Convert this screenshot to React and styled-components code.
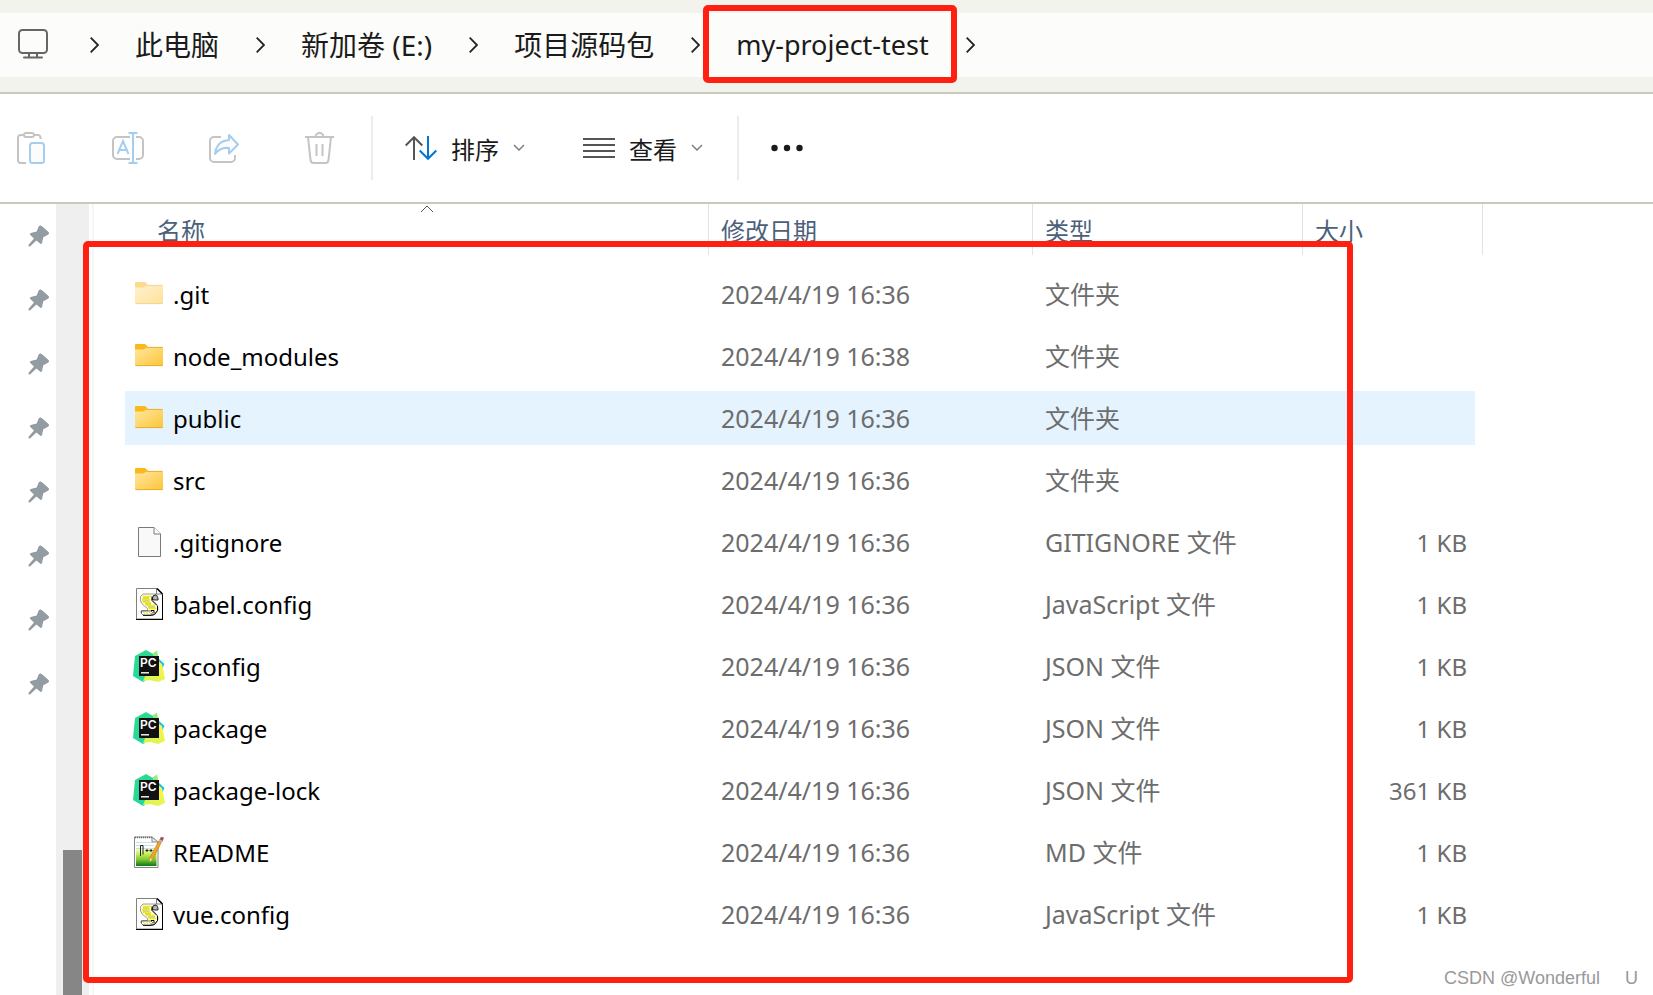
import styled, { createGlobalStyle } from "styled-components";

const crumbs = [
  { text: "此电脑" },
  { text: "新加卷 (E:)" },
  { text: "项目源码包" },
  { text: "my-project-test", marked: true },
];

const files = [
  { name: ".git", icon: "hiddenFolder", date: "2024/4/19 16:36", type: "文件夹" },
  { name: "node_modules", icon: "folder", date: "2024/4/19 16:38", type: "文件夹" },
  { name: "public", icon: "folder", date: "2024/4/19 16:36", type: "文件夹", selected: true },
  { name: "src", icon: "folder", date: "2024/4/19 16:36", type: "文件夹" },
  { name: ".gitignore", icon: "blank", date: "2024/4/19 16:36", type: "GITIGNORE 文件", size: "1 KB" },
  { name: "babel.config", icon: "script", date: "2024/4/19 16:36", type: "JavaScript 文件", size: "1 KB" },
  { name: "jsconfig", icon: "pycharm", date: "2024/4/19 16:36", type: "JSON 文件", size: "1 KB" },
  { name: "package", icon: "pycharm", date: "2024/4/19 16:36", type: "JSON 文件", size: "1 KB" },
  { name: "package-lock", icon: "pycharm", date: "2024/4/19 16:36", type: "JSON 文件", size: "361 KB" },
  { name: "README", icon: "notepad", date: "2024/4/19 16:36", type: "MD 文件", size: "1 KB" },
  { name: "vue.config", icon: "script", date: "2024/4/19 16:36", type: "JavaScript 文件", size: "1 KB" },
];

const pins = [1, 2, 3, 4, 5, 6, 7, 8];

const Folder = ({ faded }) => (
  <svg width="32" height="32" viewBox="0 0 32 32" opacity={faded ? 0.5 : 1}>
    <defs>
      <linearGradient id="folderFill" x1="0" y1="0" x2="1" y2="1">
        <stop offset="0" stopColor="#ffe6a0" />
        <stop offset="1" stopColor="#fdc63a" />
      </linearGradient>
    </defs>
    <path d="M2 5a1 1 0 0 1 1-1h8.500a2 2 0 0 1 1.500.700L15 7v4H2z" fill="#fbb81a" />
    <path d="M2 9.500h8.500L14 7h15a1 1 0 0 1 1 1v17a1 1 0 0 1-1 1H3a1 1 0 0 1-1-1z" fill="url(#folderFill)" />
    <path d="M13.500 7.400H29.500M2.500 25.600h27" stroke="#e5a91f" strokeWidth="0.9" />
  </svg>
);

const BlankFile = () => (
  <svg width="32" height="32" viewBox="0 0 32 32">
    <path d="M5.500 1.500H21l6.500 6.500v22.500h-22z" fill="#f9f9f9" stroke="#7b7b7b" />
    <path d="M21 1.500V8h6.500" fill="#fff" stroke="#7b7b7b" />
  </svg>
);

const ScriptFile = () => (
  <svg width="32" height="32" viewBox="0 0 32 32">
    <path d="M3.500 .5H24L29.500 6v25h-26z" fill="#fff" stroke="#808080" />
    <path d="M3 31.500h27M29.500 6v26" stroke="#000" />
    <path d="M23.500 0v6H30" fill="#fff" stroke="#808080" />
    <path d="M24 .5L29.500 6" stroke="#000" strokeWidth="1.500" />
    <path
      d="M10 6h13l-3 2.500-1 3 5.500 6 .5 4-3 5H10l-2-1.500v-2L9 22.500h5.500v-2l-5-4L7.500 13V8.500z"
      fill="#fffde0"
      stroke="#858585"
      strokeWidth="0.800"
    />
    <path
      d="M9.500 8.500h8.500M9 11.500h8M10 14.500h8M13 17.500h9M15.500 20.500h8"
      stroke="#f4ee00"
      strokeWidth="1.400"
    />
    <path d="M10 10h6M9.500 13h7M12 16h6M15 19h7" stroke="#9a9a10" strokeWidth="0.700" />
    <path d="M19 11.500l1.500-4 3-.5 1.500 3v2h-3z" fill="#b5b5b5" stroke="#000" strokeWidth="0.800" />
    <path d="M19 8.500v4l5 5M24.500 18v4.500l-3 4-3 1H10" fill="none" stroke="#000" />
    <path d="M8.500 23h9.500l1.500 1.500-1.500 2.500h-8l-1.500-1.500z" fill="#fff" stroke="#444" strokeWidth="0.800" />
    <path d="M10 24l2.500 2M13 24l2.500 2M16 24l2 2" stroke="#e6dc00" />
    <path d="M18 22.500h3v3" fill="none" stroke="#000" />
  </svg>
);

const PyCharmFile = () => (
  <svg width="32" height="32" viewBox="0 0 32 32">
    <defs>
      <linearGradient id="pcGreen" x1="0" y1="0" x2="0.600" y2="1">
        <stop offset="0" stopColor="#2fdc8c" />
        <stop offset="1" stopColor="#21d7a0" />
      </linearGradient>
      <linearGradient id="pcYellow" x1="0" y1="1" x2="1" y2="0">
        <stop offset="0" stopColor="#d3f552" />
        <stop offset="1" stopColor="#fdf34a" />
      </linearGradient>
    </defs>
    <path d="M25 8l6.500 6-3 6-5-4z" fill="#0fc2ec" />
    <path d="M17 5.500L24 .5l1.500 8L27 14l-8 2z" fill="#91ee72" />
    <path d="M2 6L13 0l7 4v12L12 28v3l-2 1-10-6z" fill="url(#pcGreen)" />
    <path d="M26 12l3 2 3 15-7 3-8-2-7 1 3-7z" fill="url(#pcYellow)" />
    <rect x="6" y="6" width="20" height="20" fill="#111" />
    <text x="7" y="16.500" fontFamily="Inter, sans-serif" fontSize="12" fontWeight="600" fill="#fff">
      PC
    </text>
    <path d="M8 22.800h8" stroke="#fff" strokeWidth="1.400" />
  </svg>
);

const NotepadFile = () => (
  <svg width="32" height="32" viewBox="0 0 32 32">
    <defs>
      <linearGradient id="padFill" x1="0" y1="0" x2="0" y2="1">
        <stop offset="0.300" stopColor="#fff" />
        <stop offset="0.500" stopColor="#d9f56b" />
        <stop offset="0.750" stopColor="#83cc35" />
        <stop offset="1" stopColor="#087818" />
      </linearGradient>
    </defs>
    <path d="M1.500 1H19l6 5.500V31.500H1.500z" fill="#fff" stroke="#858585" />
    <path d="M3 3h16l4.500 4v23H3z" fill="url(#padFill)" />
    <path d="M2 1.500h18" stroke="#666" strokeWidth="1.500" strokeDasharray="1 1" />
    <path d="M3 6.500h16M3 9.500h18M3 12.500h18" stroke="#c6dfe8" />
    <path d="M19 1v5h6z" fill="#eee" stroke="#888" />
    <path d="M7.500 20V9.500h2.500v9M12.500 14.500h3M14 13v3M16.500 14.500h3M18 13v3" fill="none" stroke="#222" />
    <path d="M26 4.500l2.500 1.500L20 23l-3.500 3 .5-4.500z" fill="#f0a528" stroke="#b07a1c" strokeWidth="0.600" />
    <path d="M26.500 4L28 .8l3 1-1.500 3.400z" fill="#a34858" />
    <path d="M25.500 4.500l3.500 2 .8-1.500-3.500-2z" fill="#aebed0" />
    <path d="M17 22l2.500 1.500-3 2.500z" fill="#f4d6a1" />
  </svg>
);

const fileIcons = {
  folder: <Folder />,
  hiddenFolder: <Folder faded />,
  blank: <BlankFile />,
  script: <ScriptFile />,
  pycharm: <PyCharmFile />,
  notepad: <NotepadFile />,
};

const ComputerIcon = () => (
  <svg width="36" height="32" viewBox="0 0 36 32" fill="none" stroke="#666" strokeWidth="2" strokeLinecap="round">
    <rect x="1" y="1" width="28" height="23" rx="3.500" />
    <path d="M11 24v4M19 24v4M6 28.500h18" />
  </svg>
);

const CrumbArrow = () => (
  <svg width="9" height="16" viewBox="0 0 9 16" fill="none" stroke="#222" strokeWidth="1.800">
    <path d="M.7.700L8 8 .7 15.300" />
  </svg>
);

const PinIcon = () => (
  <svg width="22" height="22" viewBox="0 0 22 22">
    <path
      d="M10.800 1.300Q12.200-.3 14 1.200L20 6.500Q22 8.300 20 9.700L15.300 12.200 14 18.200Q13.300 19.500 12 18.500L8.500 15.500 2 21.500Q.2 21.700.4 20L6 13.500 2.300 10Q1.300 8.700 2.800 8L8.700 6.500z"
      fill="#929ca2"
    />
  </svg>
);

const PasteIcon = () => (
  <svg width="32" height="32" viewBox="0 0 32 32" fill="none" strokeWidth="2">
    <path d="M9 31H3.500A2.500 2.500 0 0 1 1 28.500V5.500A2.500 2.500 0 0 1 3.500 3H7M17 3h4a2.500 2.500 0 0 1 2.500 2.500V7" stroke="#c4c4c4" />
    <rect x="7" y="1" width="10" height="4" rx="2" stroke="#c4c4c4" />
    <rect x="13" y="11" width="14" height="20" rx="2.500" stroke="#a4cef0" fill="#fcfcfc" />
  </svg>
);

const RenameIcon = () => (
  <svg width="32" height="32" viewBox="0 0 32 32" fill="none" strokeWidth="2">
    <path d="M18 5H5a4 4 0 0 0-4 4v14a4 4 0 0 0 4 4h13M24 5h3a4 4 0 0 1 4 4v14a4 4 0 0 1-4 4h-3" stroke="#c4c4c4" />
    <path d="M21 1v30M16.500 1h9M16.500 31h9M5.500 22L11 9l5.500 13M7.500 18h7" stroke="#a4cef0" />
  </svg>
);

const ShareIcon = () => (
  <svg width="32" height="32" viewBox="-2 0 32 32" fill="none" strokeWidth="2" strokeLinejoin="round">
    <path d="M12 5H5a4 4 0 0 0-4 4v17a4 4 0 0 0 4 4h17a4 4 0 0 0 4-4v-3" stroke="#c4c4c4" />
    <path d="M20 3l9 9.500-9 9v-5.500Q11 15 6 22 7.500 9 20 8z" stroke="#a4cef0" fill="#fcfcfc" />
  </svg>
);

const TrashIcon = () => (
  <svg width="32" height="32" viewBox="-3 0 32 32" fill="none" stroke="#c4c4c4" strokeWidth="2">
    <path d="M0 5h29M3 5l2.500 23Q6 31 8.500 31h12q2.500 0 3-3L26 5M10.500 5a4 4 0 0 1 8 0M11.500 12v12M17.500 12v12" />
  </svg>
);

const SortIcon = () => (
  <svg width="32" height="32" viewBox="0 0 32 32" fill="none" strokeWidth="2">
    <path d="M9 28V5M.7 13.500L9 5.200l8.300 8.300" stroke="#555" />
    <path d="M23 4v23M14.700 18.500l8.300 8.300 8.300-8.300" stroke="#0078d4" />
  </svg>
);

const ViewIcon = () => (
  <svg width="32" height="32" viewBox="0 0 32 32" stroke="#555" strokeWidth="2">
    <path d="M0 7h32M0 13h32M0 19h32M0 25h32" />
  </svg>
);

const DownIcon = () => (
  <svg width="12" height="8" viewBox="0 0 12 8" fill="none" stroke="#777" strokeWidth="1.400">
    <path d="M1 1l5 5 5-5" />
  </svg>
);

const MoreIcon = () => (
  <svg width="32" height="32" viewBox="0 0 32 32" fill="#1b1b1b">
    <circle cx="3.500" cy="16" r="3.200" />
    <circle cx="16" cy="16" r="3.200" />
    <circle cx="28.500" cy="16" r="3.200" />
  </svg>
);

const App = () => {
  return (
    <Window>
      <GlobalStyle />
      <AddressBar aria-label="路径">
        <ComputerIcon />
        <CrumbArrow />
        {crumbs.map(({ text, marked }) => (
          <CrumbItem key={text}>
            <Crumb href="#" $marked={marked}>
              {text}
            </Crumb>
            <CrumbArrow />
          </CrumbItem>
        ))}
      </AddressBar>

      <Toolbar>
        <IconGroup>
          <ToolButton disabled aria-label="粘贴">
            <PasteIcon />
          </ToolButton>
          <ToolButton disabled aria-label="重命名">
            <RenameIcon />
          </ToolButton>
          <ToolButton disabled aria-label="共享">
            <ShareIcon />
          </ToolButton>
          <ToolButton disabled aria-label="删除">
            <TrashIcon />
          </ToolButton>
        </IconGroup>
        <MenuGroup>
          <ToolButton>
            <SortIcon />
            <span>排序</span>
            <DownIcon />
          </ToolButton>
          <ToolButton>
            <ViewIcon />
            <span>查看</span>
            <DownIcon />
          </ToolButton>
        </MenuGroup>
        <ToolButton aria-label="更多">
          <MoreIcon />
        </ToolButton>
      </Toolbar>

      <Main>
        <Sidebar>
          {pins.map((pin) => (
            <PinIcon key={pin} />
          ))}
        </Sidebar>
        <ScrollTrack>
          <ScrollThumb />
        </ScrollTrack>
        <Content>
          <FileTable>
            <colgroup>
              <col width="584" />
              <col width="324" />
              <col width="270" />
              <col width="180" />
            </colgroup>
            <thead>
              <tr>
                <HeadCell $first>
                  名称
                  <SortCaret width="14" height="8" viewBox="0 0 14 8">
                    <path d="M1 7l6-6 6 6" fill="none" stroke="#555" />
                  </SortCaret>
                </HeadCell>
                <HeadCell>修改日期</HeadCell>
                <HeadCell>类型</HeadCell>
                <HeadCell>大小</HeadCell>
              </tr>
            </thead>
            <tbody>
              {files.map(({ name, icon, date, type, size, selected }) => (
                <FileRow key={name} $selected={selected}>
                  <NameCell>
                    <FileName>
                      {fileIcons[icon]}
                      <span>{name}</span>
                    </FileName>
                  </NameCell>
                  <Cell>{date}</Cell>
                  <Cell>{type}</Cell>
                  <SizeCell>{size}</SizeCell>
                </FileRow>
              ))}
            </tbody>
          </FileTable>
          <Marker />
        </Content>
        <Watermark>
          <span>CSDN @Wonderful</span>
          <span>U</span>
        </Watermark>
      </Main>
    </Window>
  );
};

const GlobalStyle = createGlobalStyle`
  * {
    box-sizing: border-box;
  }
  body {
    margin: 0;
    background: #fff;
    font-family: "Noto Sans", "Noto Sans CJK SC", sans-serif;
    font-size: 24px;
    color: #1b1b1b;
  }
  svg {
    display: block;
    flex: none;
  }
`;

const Window = styled.div`
  display: flex;
  flex-direction: column;
  min-height: 100vh;
  overflow: hidden;
`;

const AddressBar = styled.nav`
  display: flex;
  align-items: center;
  gap: 36px;
  height: 94px;
  padding: 0 18px 15px;
  border-top: 13px solid #f3f3ee;
  border-bottom: 2px solid #c9cabb;
  background: linear-gradient(#fcfcfa 64px, #f3f3ee 64px);
`;

const CrumbItem = styled.div`
  display: flex;
  align-items: center;
  gap: 37px;
`;

const Crumb = styled.a`
  position: relative;
  font-size: ${({ $marked }) => ($marked ? "27px" : "28px")};
  line-height: 40px;
  color: inherit;
  text-decoration: none;
  white-space: nowrap;
  ${({ $marked }) =>
    $marked &&
    `
    &::after {
      content: "";
      position: absolute;
      inset: -20px -28px -18px -33px;
      border: 6px solid #ff2012;
      border-radius: 5px;
    }
  `}
`;

const Toolbar = styled.div`
  display: flex;
  align-items: center;
  height: 110px;
  padding-left: 17px;
  border-bottom: 2px solid #c9cabb;
`;

const IconGroup = styled.div`
  display: flex;
  align-items: center;
  gap: 63px;
  height: 64px;
  padding-right: 37px;
  border-right: 2px solid #ececec;
`;

const MenuGroup = styled.div`
  display: flex;
  align-items: center;
  gap: 58px;
  height: 64px;
  padding: 0 34px 0 32px;
  margin-right: 32px;
  border-right: 2px solid #ececec;
`;

const ToolButton = styled.button`
  display: flex;
  align-items: center;
  gap: 14px;
  padding: 0;
  border: none;
  background: none;
  font: inherit;
  color: inherit;
`;

const Main = styled.main`
  position: relative;
  display: flex;
  flex: 1;
`;

const Sidebar = styled.aside`
  display: flex;
  flex-direction: column;
  gap: 42px;
  width: 56px;
  padding: 21px 0 0 28px;
`;

const ScrollTrack = styled.div`
  display: flex;
  align-items: flex-end;
  width: 33px;
  padding-left: 7px;
  background: #efefef;
`;

const ScrollThumb = styled.div`
  width: 19px;
  height: 145px;
  background: #868686;
`;

const Content = styled.section`
  position: relative;
  flex: 1;
  margin-left: 3px;
  padding-left: 31px;
  border-left: 2px solid #f6f6f6;
`;

const FileTable = styled.table`
  width: 1358px;
  table-layout: fixed;
  border-collapse: separate;
  border-spacing: 0;
`;

const HeadCell = styled.th`
  position: relative;
  height: 59px;
  padding: 8px 0 14px ${({ $first }) => ($first ? "32px" : "12px")};
  font-weight: 400;
  line-height: 36px;
  text-align: left;
  color: #4c607a;
  background: linear-gradient(#e3e3e3, #e3e3e3) right top / 1px 51px no-repeat;
`;

const SortCaret = styled.svg`
  position: absolute;
  top: 1px;
  left: 295px;
`;

const Cell = styled.td`
  height: 62px;
  padding: 0 0 0 12px;
  border: 0 solid transparent;
  border-width: 4px 0;
  background-clip: padding-box;
  font-size: 25px;
  line-height: 36px;
  color: #6d6d6d;
  white-space: nowrap;
`;

const NameCell = styled(Cell)`
  padding-left: 8px;
  font-size: 24px;
  color: #000;
`;

const SizeCell = styled(Cell)`
  padding-top: 2px;
  padding-right: 8px;
  border-right-width: 8px;
  font-size: 24px;
  text-align: right;
`;

const FileName = styled.div`
  display: flex;
  align-items: center;
  gap: 8px;
  span {
    padding-top: 2px;
  }
`;

const FileRow = styled.tr`
  td {
    background-color: ${({ $selected }) => ($selected ? "#e5f3ff" : "transparent")};
  }
`;

const Marker = styled.div`
  position: absolute;
  top: 37px;
  bottom: 12px;
  left: -11px;
  width: 1270px;
  border: 6px solid #ff2012;
  border-radius: 5px;
  pointer-events: none;
`;

const Watermark = styled.div`
  position: absolute;
  right: 15px;
  bottom: 6px;
  display: flex;
  gap: 25px;
  font-family: "Liberation Sans", sans-serif;
  font-size: 18px;
  line-height: 22px;
  color: #999;
`;

export default App;
